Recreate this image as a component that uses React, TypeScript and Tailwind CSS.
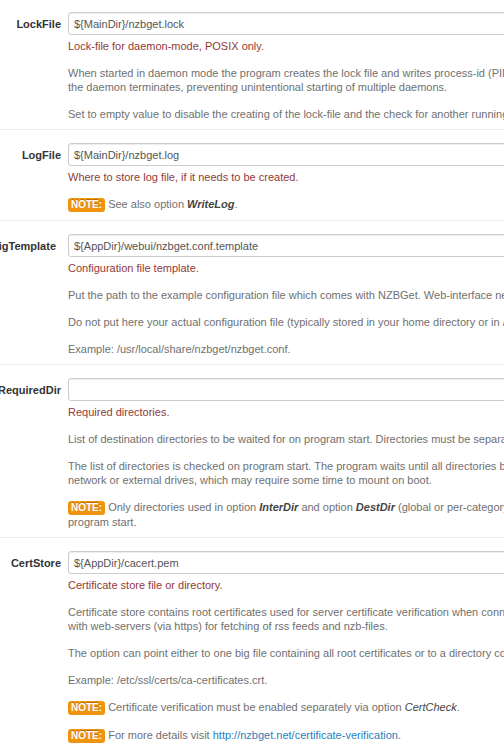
import React from 'react';

type Line = React.ReactNode;

const Note: React.FC = () => (
  <span className="inline-block bg-[#f0940f] text-white font-bold text-[10px] leading-[14px] px-[3px] rounded-[3px] [text-shadow:0_-1px_0_rgba(0,0,0,0.25)]">
    NOTE:
  </span>
);

const B: React.FC<{ children: React.ReactNode }> = ({ children }) => (
  <b className="italic text-[#444]">{children}</b>
);

const Para: React.FC<{ lines: Line[]; className?: string }> = ({ lines, className }) => (
  <div className={'mt-[13px] ' + (className || '')}>
    {lines.map((l, i) => (
      <div key={i} className="whitespace-nowrap">
        {l}
      </div>
    ))}
  </div>
);

interface Option {
  name: string;
  value: string;
  summary: string;
  paras: Line[][];
  labelShift?: boolean;
}

const options: Option[] = [
  {
    name: 'LockFile',
    value: '${MainDir}/nzbget.lock',
    summary: 'Lock-file for daemon-mode, POSIX only.',
    paras: [
      [
        'When started in daemon mode the program creates the lock file and writes process-id (PID) into it. That info can be used in shell scripts. If the lock file cannot be created',
        'the daemon terminates, preventing unintentional starting of multiple daemons.',
      ],
      ['Set to empty value to disable the creating of the lock-file and the check for another running instance.'],
    ],
  },
  {
    name: 'LogFile',
    value: '${MainDir}/nzbget.log',
    summary: 'Where to store log file, if it needs to be created.',
    paras: [
      [
        <>
          <Note /> See also option <B>WriteLog</B>.
        </>,
      ],
    ],
  },
  {
    name: 'ConfigTemplate',
    value: '${AppDir}/webui/nzbget.conf.template',
    summary: 'Configuration file template.',
    labelShift: true,
    paras: [
      ['Put the path to the example configuration file which comes with NZBGet. Web-interface needs this file to read option descriptions.'],
      ['Do not put here your actual configuration file (typically stored in your home directory or in /etc/nzbget.conf) but instead the unmodified example file.'],
      ['Example: /usr/local/share/nzbget/nzbget.conf.'],
    ],
  },
  {
    name: 'RequiredDir',
    value: '',
    summary: 'Required directories.',
    paras: [
      ['List of destination directories to be waited for on program start. Directories must be separated with commas or semicolons.'],
      [
        'The list of directories is checked on program start. The program waits until all directories become available before starting download. This is useful if the directories are located on',
        'network or external drives, which may require some time to mount on boot.',
      ],
      [
        <>
          <Note /> Only directories used in option <B>InterDir</B> and option <B>DestDir</B> (global or per-category) can be used in this option. The directories are checked on
        </>,
        'program start.',
      ],
    ],
  },
  {
    name: 'CertStore',
    value: '${AppDir}/cacert.pem',
    summary: 'Certificate store file or directory.',
    paras: [
      [
        'Certificate store contains root certificates used for server certificate verification when connecting to news servers with TLS/SSL and',
        'with web-servers (via https) for fetching of rss feeds and nzb-files.',
      ],
      ['The option can point either to one big file containing all root certificates or to a directory containing certificate files.'],
      ['Example: /etc/ssl/certs/ca-certificates.crt.'],
      [
        <>
          <Note /> Certificate verification must be enabled separately via option <i className="text-[#444]">CertCheck</i>.
        </>,
      ],
      [
        <>
          <Note /> For more details visit{' '}
          <a className="text-[#2a7fc0]">http://nzbget.net/certificate-verification</a>.
        </>,
      ],
    ],
  },
];

const OptionRow: React.FC<{ opt: Option; first: boolean }> = ({ opt, first }) => (
  <div className={'flex border-b border-[#eee] pb-[8px] ' + (first ? 'pt-[12px]' : 'pt-[13px]')}>
    <div className={'w-[61px] shrink-0 h-[23px] flex items-center justify-end font-bold text-[#333] whitespace-nowrap ' + (opt.labelShift ? 'pr-[5px]' : '')}>
      {opt.name}
    </div>
    <div className="ml-[7px] w-[820px] text-[#707070]">
      <input
        readOnly
        defaultValue={opt.value}
        className="block w-[820px] h-[23px] border border-[#ccc] rounded-[3px] px-[5px] text-[11px] text-[#555] bg-white outline-none shadow-[inset_0_1px_1px_rgba(0,0,0,0.075)] font-['Liberation_Sans',Arial,sans-serif]"
      />
      <div className="mt-[4px] text-[#8f3b39] whitespace-nowrap">{opt.summary}</div>
      {opt.paras.map((p, i) => (
        <Para key={i} lines={p} />
      ))}
    </div>
  </div>
);

export default function App() {
  return (
    <div className="w-[504px] h-[750px] overflow-hidden bg-white font-['Liberation_Sans',Arial,sans-serif] text-[11px] leading-[14px]">
      <div className="w-[900px]">
        {options.map((o, i) => (
          <OptionRow key={o.name} opt={o} first={i === 0} />
        ))}
      </div>
    </div>
  );
}
